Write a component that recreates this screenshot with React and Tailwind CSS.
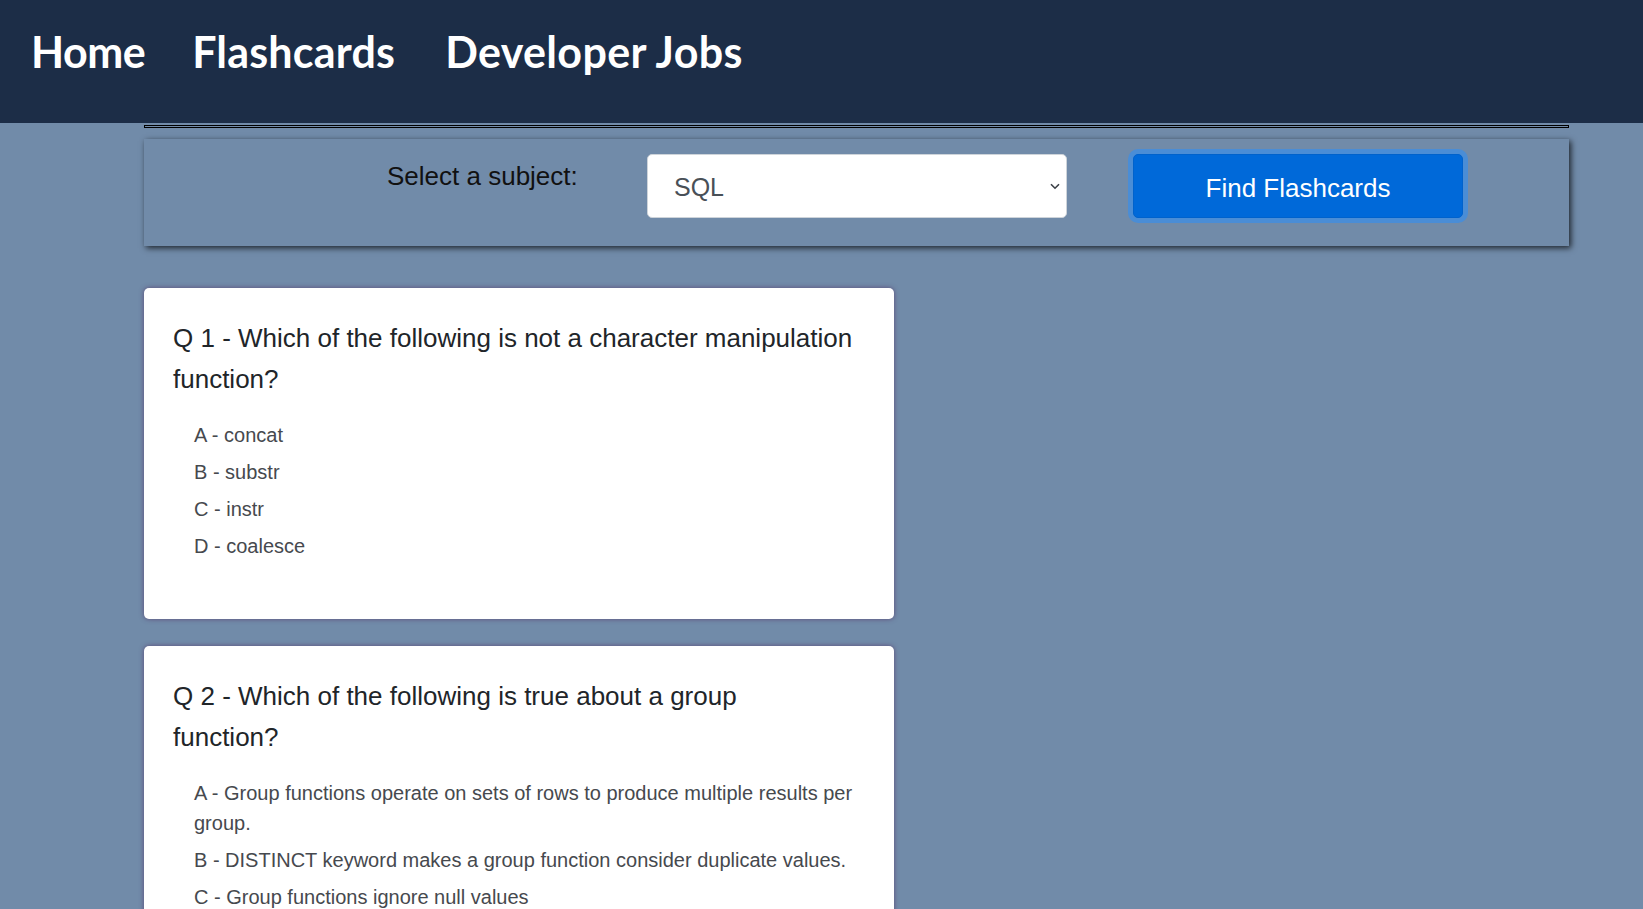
import React from "react";

const q1 = ["A - concat", "B - substr", "C - instr", "D - coalesce"];
const q2 = [
  "A - Group functions operate on sets of rows to produce multiple results per group.",
  "B - DISTINCT keyword makes a group function consider duplicate values.",
  "C - Group functions ignore null values",
];

function Card({ line1, line2, answers, className = "" }) {
  return (
    <div
      className={
        "w-[750px] bg-white rounded-[5px] pt-[30px] pb-[30px] pl-[29px] pr-[28px] shadow-[0_0_5px_rgba(88,62,110,0.85)] " +
        className
      }
    >
      <h2 className="text-[26px] leading-[41px] text-[#212529] font-normal">
        {line1}
        <br />
        {line2}
      </h2>
      <ul className="mt-[20px] mb-[28px] pl-[21px] flex flex-col gap-[7px]">
        {answers.map((a) => (
          <li key={a} className="text-[20px] leading-[30px] text-[#46494e]">
            {a}
          </li>
        ))}
      </ul>
    </div>
  );
}

export default function App() {
  return (
    <div className="min-h-screen bg-[#718ba9] font-['Liberation_Sans',Arial,sans-serif] pb-[40px]">
      <header className="h-[123px] bg-[#1c2d47] pl-[31px] pt-[26px]">
        <nav className="flex font-['Lato',sans-serif] font-bold text-white text-[43px] leading-[52px]">
          <a href="#" className="tracking-[-0.5px]">Home</a>
          <a href="#" className="ml-[47px] tracking-[0.2px]">Flashcards</a>
          <a href="#" className="ml-[50px] tracking-[0.35px]">Developer Jobs</a>
        </nav>
      </header>
      <main className="ml-[144px] w-[1425px]">
        <div className="mt-[2px] h-[3px] border border-black" />
        <div className="mt-[11px] h-[107px] flex items-start pt-[15px] shadow-[2px_2px_6px_rgba(0,0,0,0.75)]">
          <label className="ml-[243px] w-[260px] pt-[3px] text-[26px] leading-[39px] text-[#111]">
            Select a subject:
          </label>
          <div className="relative w-[420px] h-[64px]">
            <select
              defaultValue="SQL"
              className="appearance-none w-full h-full bg-white border border-[#ced4da] rounded-[5px] pl-[26px] pt-[4px] text-[25px] text-[#495057] font-['Liberation_Sans',Arial,sans-serif] outline-none"
            >
              <option>SQL</option>
              <option>JavaScript</option>
              <option>Python</option>
            </select>
            <svg
              className="absolute right-[7px] top-[29px] pointer-events-none"
              width="10"
              height="7"
              viewBox="0 0 10 7"
            >
              <path d="M1 1.2 L5 5.2 L9 1.2" fill="none" stroke="#3b4046" strokeWidth="1.6" />
            </svg>
          </div>
          <button className="ml-[66px] w-[330px] h-[64px] pt-[4px] rounded-[5px] bg-[#0069d9] border border-[#0062cc] text-white text-[26px] shadow-[0_0_0_5px_#4a8dd6]">
            Find Flashcards
          </button>
        </div>
        <div className="mt-[42px] flex flex-col gap-[27px]">
          <Card
            line1="Q 1 - Which of the following is not a character manipulation"
            line2="function?"
            answers={q1}
          />
          <Card
            line1="Q 2 - Which of the following is true about a group"
            line2="function?"
            answers={q2}
          />
        </div>
      </main>
    </div>
  );
}
